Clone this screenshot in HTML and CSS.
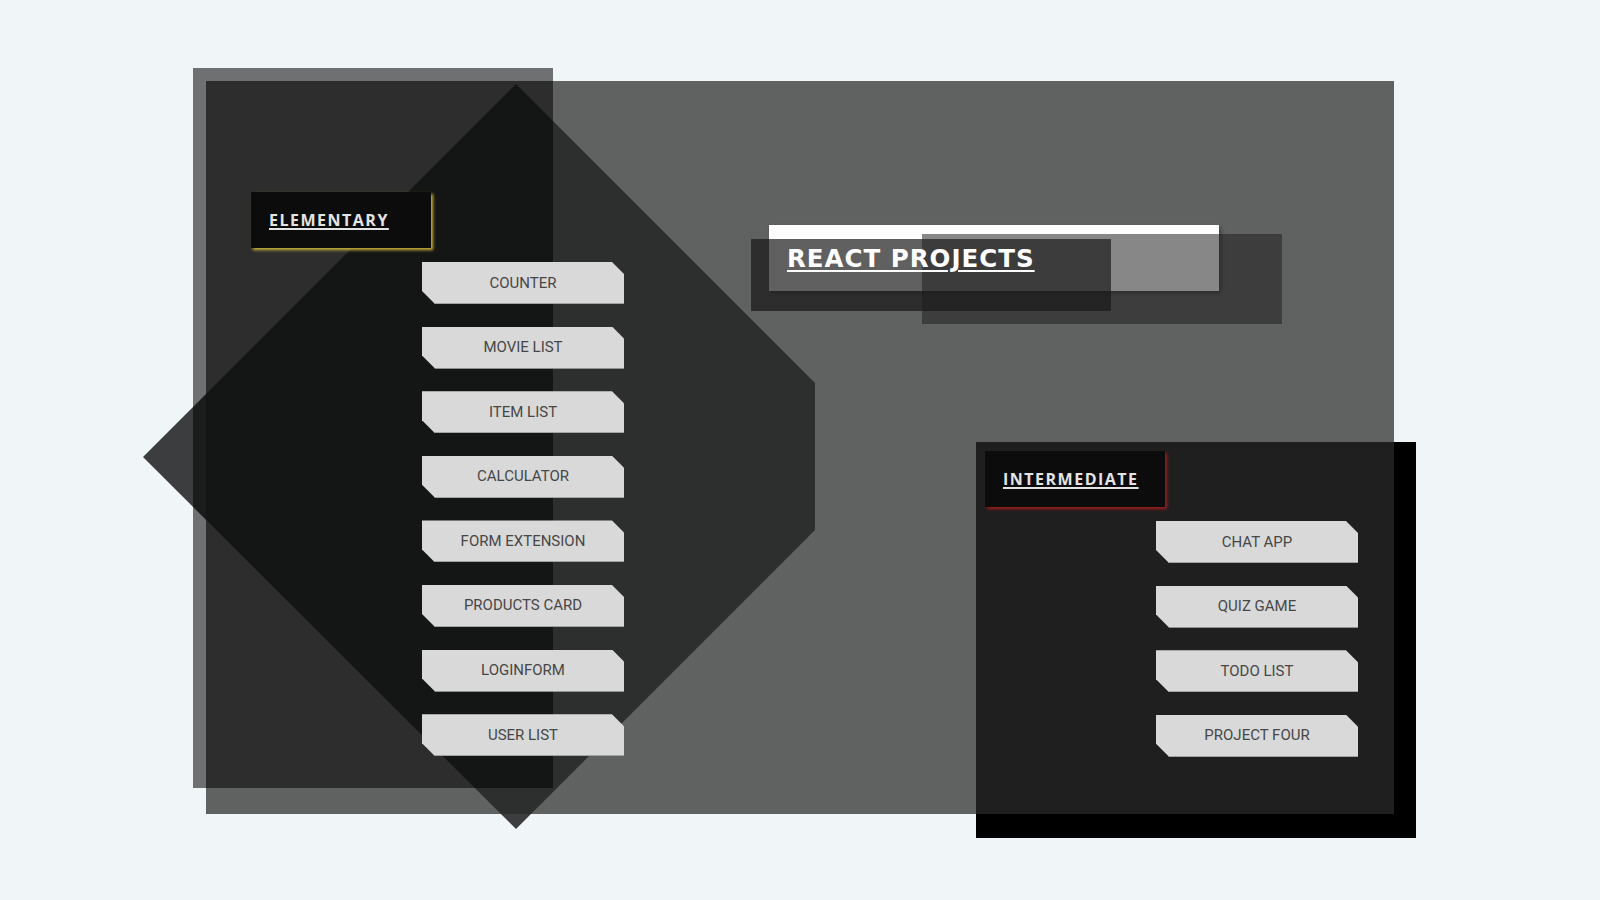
FILE: index.html
```html
<!DOCTYPE html>
<html lang="en">
<head>
<meta charset="utf-8">
<title>React Projects</title>
<link rel="stylesheet" href="styles.css">
</head>
<body>
<div class="page">
  <main class="board">
    <div class="diamond"></div>

    <section class="level level-elementary">
      <h2 class="level-label label-elementary"><a href="#">ELEMENTARY</a></h2>
      <nav class="project-list">
        <a class="project-btn" href="#">COUNTER</a>
        <a class="project-btn" href="#">MOVIE LIST</a>
        <a class="project-btn" href="#">ITEM LIST</a>
        <a class="project-btn" href="#">CALCULATOR</a>
        <a class="project-btn" href="#">FORM EXTENSION</a>
        <a class="project-btn" href="#">PRODUCTS CARD</a>
        <a class="project-btn" href="#">LOGINFORM</a>
        <a class="project-btn" href="#">USER LIST</a>
      </nav>
    </section>

    <header class="title">
      <div class="title-plate"></div>
      <h1 class="title-text"><a href="#">REACT PROJECTS</a></h1>
    </header>

    <section class="level-intermediate">
      <div class="level-inner">
        <h2 class="level-label label-intermediate"><a href="#">INTERMEDIATE</a></h2>
        <nav class="project-list">
          <a class="project-btn" href="#">CHAT APP</a>
          <a class="project-btn" href="#">QUIZ GAME</a>
          <a class="project-btn" href="#">TODO LIST</a>
          <a class="project-btn" href="#">PROJECT FOUR</a>
        </nav>
      </div>
    </section>
  </main>
</div>
</body>
</html>
```
FILE: styles.css
```css
* { box-sizing: border-box; }

html, body {
  margin: 0;
  padding: 0;
  background: #f0f5f8;
  font-family: "Roboto", "Liberation Sans", sans-serif;
}

.page {
  width: 1600px;
  height: 900px;
  padding: 81px 0 0 206px;
  overflow: hidden;
}

.board {
  position: relative;
  width: 1188px;
  height: 733px;
  background: #606261;
}

/* decorative diamond behind the elementary column */
.diamond {
  position: absolute;
  left: -63px;
  top: 3px;
  width: 672px;
  height: 745px;
  background: rgba(40, 41, 41, 0.9);
  clip-path: polygon(373px 0, 672px 299px, 672px 446px, 373px 745px, 0 373px);
}

/* elementary column */
.level-elementary {
  position: absolute;
  left: -13px;
  top: -13px;
  width: 360px;
  height: 720px;
  background: rgba(0, 0, 0, 0.54);
  padding: 124px 0 0 58px;
}

.level-label {
  margin: 0;
  width: 180px;
  height: 56px;
  background: #0c0c0c;
  display: flex;
  align-items: center;
  padding-left: 18px;
  font-family: "Open Sans", "Liberation Sans", sans-serif;
  font-weight: 700;
  font-size: 16px;
  letter-spacing: 1.5px;
}

.level-label a {
  color: #e4e4e4;
  text-decoration: underline;
  text-decoration-thickness: 1.5px;
  text-underline-offset: 2px;
}

.label-elementary { box-shadow: 2px 2px 3px #cdb53c; }
.label-intermediate { box-shadow: 2px 2px 3px #a01c1c; }

.project-list {
  display: flex;
  flex-direction: column;
  gap: 22.6px;
  margin: 14px 0 0 171px;
  width: 202px;
}

.project-btn {
  display: flex;
  align-items: center;
  justify-content: center;
  width: 202px;
  height: 42px;
  background: #d9d9d9;
  border-bottom: 1px solid #a2a2a2;
  color: #474747;
  font-size: 15px;
  text-decoration: none;
  clip-path: polygon(0 0, calc(100% - 12px) 0, 100% 12px, 100% 100%, 13px 100%, 0 calc(100% - 13px));
}

/* title card */
.title {
  position: absolute;
  left: 545px;
  top: 144px;
  width: 531px;
  height: 99px;
}

.title-plate {
  position: absolute;
  left: 18px;
  top: 0;
  width: 450px;
  height: 66px;
  background: #ffffff;
  box-shadow: 2px 2px 4px rgba(0, 0, 0, 0.35);
}

.title::before,
.title::after {
  content: "";
  position: absolute;
  z-index: 1;
}

.title::before {
  left: 0;
  top: 14px;
  width: 360px;
  height: 72px;
  background: rgba(20, 20, 20, 0.68);
}

.title::after {
  left: 171px;
  top: 9px;
  width: 360px;
  height: 90px;
  background: rgba(28, 28, 28, 0.53);
}

.title-text {
  position: relative;
  z-index: 2;
  margin: 0;
  padding: 20px 0 0 36px;
  font-family: "DejaVu Sans", sans-serif;
  font-weight: 700;
  font-size: 24.5px;
  letter-spacing: 1px;
  line-height: 28px;
}

.title-text a {
  color: #ffffff;
  text-decoration: underline;
  text-decoration-thickness: 2px;
  text-underline-offset: 3px;
}

/* intermediate column */
.level-intermediate {
  position: absolute;
  left: 770px;
  top: 361px;
  width: 440px;
  height: 396px;
  background: #000000;
}

.level-inner {
  width: 418px;
  height: 372px;
  background: #1f1f1f;
  padding: 9px;
}
```
